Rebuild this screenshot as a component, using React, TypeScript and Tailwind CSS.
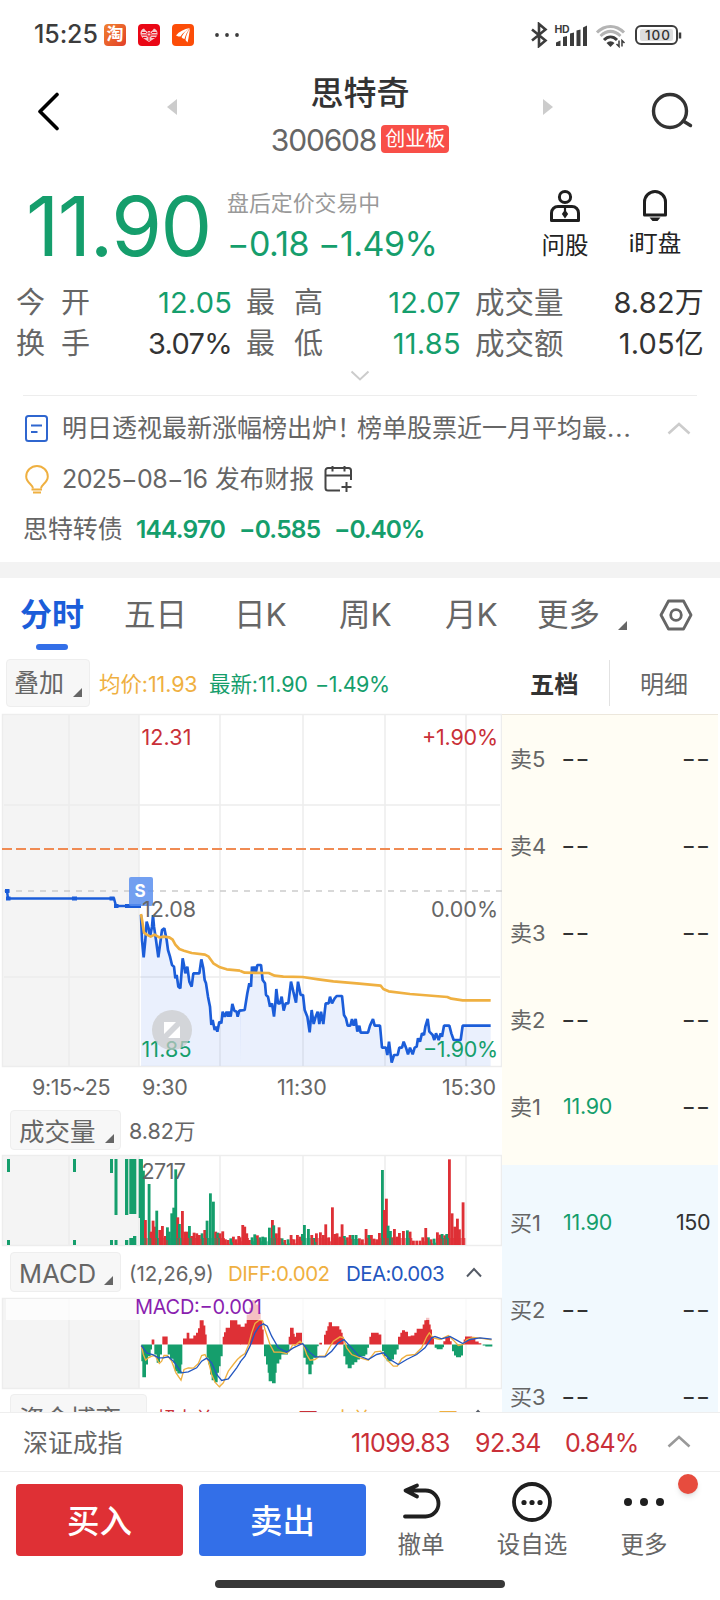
import type { ReactNode } from "react";
import clsx from "clsx";

const RED = "#de3036";
const GREEN = "#159e6c";
const YELLOW = "#efb041";
const BLUE = "#1b5dd9";

const stats = [
  ["今开", "12.05", "最高", "12.07", "成交量", "8.82万"],
  ["换手", "3.07%", "最低", "11.85", "成交额", "1.05亿"],
];

const asks = [
  { name: "卖5", price: "--", amount: "--" },
  { name: "卖4", price: "--", amount: "--" },
  { name: "卖3", price: "--", amount: "--" },
  { name: "卖2", price: "--", amount: "--" },
  { name: "卖1", price: "11.90", amount: "--" },
];

const bids = [
  { name: "买1", price: "11.90", amount: "150" },
  { name: "买2", price: "--", amount: "--" },
  { name: "买3", price: "--", amount: "--" },
];

// Chart series are plotted on a 3x grid, split at x = 240.
const priceA =
  "423,225 426,300 431,352 436,300 440,245 446,265 450,290 456,260 459,225 462,260 468,300 475,352 482,300 486,270 493,265 500,300 504,330 510,350 516,375 522,380 526,415 530,405 535,440 541,445 548,355 552,375 556,400 562,380 568,425 575,440 580,400 598,400 604,358 610,385 614,420 618,430 624,470 630,500 634,555 638,540 644,570 648,560 652,575 658,545 664,550 668,515 674,530 680,515 684,530 688,515 692,530 697,492 703,512 710,515 713,530 718,512 722,512";
const priceB =
  "0,272 14,270 22,220 28,190 33,200 36,140 40,155 44,140 48,155 52,135 63,135 68,180 75,190 78,225 84,230 90,260 96,250 102,290 106,250 109,207 114,250 120,250 125,230 131,272 137,250 145,250 153,185 160,215 168,248 174,185 182,225 189,225 194,270 202,290 209,337 215,270 221,312 227,290 233,275 238,312 243,275 250,312 257,250 266,250 270,230 276,250 284,235 290,228 306,228 312,285 318,295 323,317 331,317 336,297 341,317 347,297 352,335 358,317 362,338 384,338 390,317 399,297 404,317 420,317 426,383 438,383 442,405 447,365 455,428 462,405 473,405 478,383 486,383 491,365 498,383 504,403 510,383 518,403 524,383 530,380 534,355 540,365 546,340 552,345 556,320 563,297 568,335 578,345 583,360 588,340 596,360 602,340 606,350 612,317 628,317 634,340 641,360 662,360 668,317 752,317";
const avgA =
  "423,222 427,245 432,278 440,284 452,290 464,284 478,292 492,290 508,292 518,299 526,314 538,327 552,332 575,339 615,344 626,350 640,370 660,382 680,388 720,392";
const avgB =
  "0,152 14,158 86,159 104,167 130,170 188,171 235,178 280,184 350,190 422,197 430,207 446,214 510,222 622,231 634,236 668,241 752,241";

type Bar = [x: number, top: number, color: "r" | "g"];

const barsA: Bar[] = [
  [424, 178, "g"], [430, 212, "g"], [436, 360, "r"], [447, 252, "g"], [453, 395, "r"],
  [459, 362, "r"], [464, 380, "r"], [470, 332, "g"], [479, 390, "r"], [487, 378, "r"],
  [496, 408, "r"], [502, 382, "g"], [508, 395, "g"], [515, 340, "g"], [521, 323, "g"],
  [527, 208, "g"], [533, 352, "r"], [538, 372, "g"], [547, 333, "r"], [554, 395, "r"],
  [561, 395, "r"], [568, 378, "g"], [575, 408, "r"], [582, 398, "r"], [590, 400, "r"],
  [598, 405, "r"], [606, 400, "g"], [614, 390, "r"], [621, 362, "g"], [631, 280, "g"],
  [640, 305, "g"], [647, 395, "r"], [653, 398, "g"], [660, 400, "r"], [668, 394, "r"],
  [676, 418, "r"], [684, 420, "r"], [692, 415, "g"], [700, 410, "r"], [708, 418, "r"],
  [716, 408, "r"],
];

const barsB: Bar[] = [
  [0, 412, "r"], [8, 375, "r"], [14, 380, "r"], [20, 400, "r"], [28, 420, "r"],
  [36, 412, "g"], [44, 403, "g"], [52, 406, "r"], [60, 412, "g"], [68, 410, "g"],
  [76, 412, "g"], [88, 383, "g"], [97, 360, "r"], [101, 376, "g"], [109, 400, "r"],
  [117, 382, "r"], [126, 415, "g"], [134, 420, "r"], [144, 418, "g"], [153, 405, "r"],
  [162, 418, "r"], [172, 405, "r"], [180, 410, "r"], [187, 402, "g"], [193, 375, "g"],
  [205, 387, "g"], [215, 405, "r"], [222, 414, "g"], [229, 400, "r"], [241, 397, "r"],
  [250, 405, "r"], [257, 373, "r"], [266, 412, "r"], [277, 322, "r"], [284, 402, "r"],
  [291, 400, "r"], [299, 410, "r"], [306, 373, "r"], [313, 408, "g"], [322, 412, "r"],
  [330, 405, "r"], [338, 405, "g"], [348, 405, "g"], [358, 415, "r"], [367, 418, "r"],
  [378, 387, "r"], [386, 405, "g"], [394, 405, "r"], [402, 416, "r"], [410, 418, "r"],
  [418, 399, "r"], [427, 210, "g"], [433, 330, "r"], [439, 296, "r"], [444, 377, "g"],
  [451, 393, "g"], [457, 412, "r"], [463, 387, "r"], [471, 410, "r"], [478, 399, "r"],
  [490, 393, "r"], [502, 391, "g"], [510, 395, "r"], [520, 422, "r"], [530, 422, "r"],
  [540, 422, "r"], [548, 412, "r"], [557, 384, "r"], [565, 412, "g"], [573, 418, "r"],
  [582, 416, "g"], [592, 397, "r"], [600, 404, "r"], [606, 402, "g"], [614, 406, "r"],
  [620, 402, "g"], [628, 178, "r"], [636, 340, "r"], [644, 380, "r"], [652, 356, "r"],
  [658, 388, "r"], [669, 307, "r"],
];

const macdRedA =
  "M455 735V720H463V735ZM487 735V711H503V735ZM549 735V717H560V700H568V717H580V708H588V700H594V686H599V662H611V678H616V705H620V735ZM668 735V712H672V698H677V685H690V662H712V675H722V735Z";
const macdRedB =
  "M0 735V682H14V672H20V645H28V625H35V602H48V615H55V640H62V662H67V690H71V735ZM146 735V712H150V685H161V703H164V712H168V700H186V735ZM238 735V730H246V735ZM252 735V706H257V694H262V680H266V668H276V680H298V690H304V700H308V712H311V735ZM388 735V712H393V700H416V705H424V735ZM474 735V712H481V700H486V692H495V697H504V710H512V708H523V700H530V688H548V675H553V662H558V655H568V675H572V690H576V712H582V735ZM610 735V725H616V712H630V725H635V735ZM671 735V720H675V711H697V718H706V726H716V731H724V735Z";
const macdGreenA =
  "M424 735V785H427V833H438V795H444V770H452V750H456V735ZM463 735V765H470V790H480V765H486V735ZM503 735V765H510V778H520V790H524V815H532V822H544V795H547V735ZM620 735V775H625V795H630V825H635V842H643V848H653V820H657V800H662V770H668V735Z";
const macdGreenB =
  "M72 735V770H78V795H83V820H86V845H96V851H107V820H110V792H118V780H124V765H144V758H148V735ZM190 735V775H197V795H205V824H215V795H220V775H232V740H236V735ZM310 735V770H316V795H323V806H335V796H343V788H352V780H360V770H376V765H382V745H387V735ZM426 735V755H432V770H440V785H455V780H462V765H470V750H476V735ZM584 735V745H590V749H608V743H612V735ZM636 735V755H642V768H648V773H663V768H669V735ZM728 735V738H736V741H757V735Z";
const diffA =
  "424,738 430,765 437,782 445,775 455,770 465,768 478,792 485,785 492,768 502,768 515,785 528,820 543,842 552,810 565,805 580,806 595,792 605,768 615,765 625,785 635,825 645,848 658,862 670,850 685,815 700,795 712,780 722,771";
const diffB =
  "0,772 15,762 25,738 35,700 45,672 60,660 68,665 75,690 90,735 102,758 120,758 140,762 150,752 158,735 165,738 180,725 190,735 200,765 210,782 225,780 238,770 255,770 265,750 280,725 300,712 310,715 320,745 335,765 360,775 385,782 395,770 405,757 422,755 432,770 445,785 460,800 472,800 485,778 500,768 525,765 545,745 560,712 568,700 580,715 600,720 625,708 640,722 655,738 670,735 680,720 700,714 720,716 755,721";
const deaA =
  "424,738 440,760 460,766 475,775 490,775 505,772 520,785 545,820 565,817 590,805 605,785 620,776 635,790 650,825 665,843 685,838 710,805 722,786";
const deaB =
  "0,788 15,770 30,740 45,700 58,680 70,673 82,680 95,710 115,745 140,758 160,745 188,732 205,755 225,772 255,772 275,755 295,730 312,720 330,740 355,768 385,780 410,765 430,760 450,780 475,795 500,780 530,765 555,745 575,715 585,711 605,718 630,711 650,722 668,732 690,720 720,715 755,719";

function StatusBar() {
  return (
    <div className="flex h-[69px] shrink-0 items-center pl-[34px] text-[#3c3c3c]">
      <span className="w-[70px] text-[25px] font-medium tracking-[-0.1px]">15:25</span>
      <div className="flex gap-3">
        <span className="flex size-[22px] items-center justify-center rounded-[4px] bg-gradient-to-br from-[#f08030] to-[#e23c28] text-[17px] leading-none font-bold text-white">
          淘
        </span>
        <svg className="size-[22px]" viewBox="0 0 22 22">
          <rect width="22" height="22" rx="4" fill="#ea0715" />
          <path
            d="M6 4.5C3.5 5 2.3 7.5 2.5 9.500C3 13 5 14 6.500 15L11 18L15.500 15C18 14 19.300 12 19.500 9.500C19.600 7 18 5 16 4.500L14 7H8Z"
            fill="#f6c9cb"
          />
          <path
            d="M4 8.500h4M3.500 11h4.500M5 13.500h3.500M14 8.500h4.500M14 11h5M13.500 13.500h4M9 9h4v3h-4zM11 12v5M8 5l1.500 3M14 5l-1.500 3"
            stroke="#ea0715"
            fill="none"
          />
        </svg>
        <svg className="size-[22px]" viewBox="0 0 22 22">
          <rect width="22" height="22" rx="4" fill="#fc4d08" />
          <path
            d="M4 11.500C7 7.500 12 5 18 4C14 6.500 10.500 9 8.500 12.500C7.500 12.500 5.500 12.500 4 11.500ZM9.500 13C11.500 9 14.500 6 18 4.500C15 8 13.500 11 12.500 15C11.500 14.800 10.500 14.500 9.500 13ZM13.500 16C14 11.500 15.500 8 18 5C17 9.500 17 13 15.500 18.500Z"
            fill="#fff"
          />
        </svg>
      </div>
      <svg className="ml-[21px] h-1 w-6" viewBox="0 0 24 4" fill="#3c3c3c">
        <circle cx="2" cy="2" r="1.900" />
        <circle cx="12" cy="2" r="1.900" />
        <circle cx="22" cy="2" r="1.900" />
      </svg>
      <svg className="ml-[291px] h-[26px] w-[152px]" viewBox="530 21 152 26" fill="none">
        <path
          d="M532 28.500L545.500 39.500L539 45V23L545.500 28.500L532 39.500"
          stroke="#3c3c3c"
          strokeWidth="2.600"
        />
        <text x="554.500" y="32" fontSize="10.500" fontWeight="700" fill="#3c3c3c" textLength="15">
          HD
        </text>
        <path
          d="M556 45v-3.500l4.500-2V45zM563 45v-9l4-1v10zM570 45V32.500l4-1V45zM576.500 45V29.500l4-1V45zM583 45V26.500l4-2V45z"
          fill="#3c3c3c"
        />
        <path d="M597 31.500C605 23.500 616 23.500 624 31.500" stroke="#b4b4b4" strokeWidth="3" />
        <path d="M600.500 35C607 29 614 29 620.500 35" stroke="#b4b4b4" strokeWidth="3" />
        <path d="M604 39C608 35 613 35 617 39" stroke="#3c3c3c" strokeWidth="3" />
        <path d="M606.500 42a5.500 5.500 0 0 1 8 0l-4 4z" fill="#3c3c3c" />
        <path d="M619 39.500v6l-2.500-2.500M622 45.500v-6l2.500 2.500" stroke="#3c3c3c" strokeWidth="1.500" />
        <rect x="636" y="25" width="41" height="18" rx="5" stroke="#3c3c3c" strokeWidth="2" />
        <rect x="640" y="28" width="33" height="12" rx="2" fill="#dedede" />
        <path d="M680 31.500v6" stroke="#3c3c3c" strokeWidth="2.500" />
        <text x="645" y="39" fontSize="13.500" fontWeight="500" fill="#333" textLength="25">
          100
        </text>
      </svg>
    </div>
  );
}

function Header() {
  return (
    <header className="flex h-[109px] shrink-0 items-start pt-1">
      <svg className="mt-[19px] ml-[37px] h-[39px] w-[22px]" viewBox="0 0 22 39" fill="none">
        <path d="M20 2.500L3 19.500L20 36.500" stroke="#000" strokeWidth="3.600" strokeLinecap="round" strokeLinejoin="round" />
      </svg>
      <svg className="mt-[26px] ml-[108px] h-4 w-2.5" viewBox="0 0 10 16">
        <path d="M10 0v16L0 8z" fill="#ccc" />
      </svg>
      <div className="flex flex-1 flex-col items-center">
        <h1 className="h-10 text-[33px] leading-10 font-medium text-[#333]">思特奇</h1>
        <div className="mt-3 flex h-7 items-center gap-[5px]">
          <span className="pt-0.5 text-[30px] tracking-[-1.2px] text-[#666]">300608</span>
          <span className="flex h-7 w-[68px] items-center justify-center rounded-[4px] bg-[#f84f48] text-[20px] text-white">
            创业板
          </span>
        </div>
      </div>
      <svg className="mt-[26px] h-4 w-2.5" viewBox="0 0 10 16">
        <path d="M0 0v16l10-8z" fill="#ccc" />
      </svg>
      <svg className="mt-[19px] mr-[27px] ml-[97px] h-[40px] w-[43px]" viewBox="0 0 43 40" fill="none" stroke="#333" strokeWidth="3.400" strokeLinecap="round">
        <circle cx="20" cy="19" r="16.500" />
        <path d="M34 29.500l6.500 4" />
      </svg>
    </header>
  );
}

function Quote() {
  return (
    <section className="flex h-[104px] shrink-0">
      <div className="mt-1 h-[90px] w-[227px] pl-[26px] text-[82px] leading-[90px] tracking-[-1.500px] text-[#159e6c]">
        11.90
      </div>
      <div className="w-[303px] pt-3">
        <div className="text-[21.900px] leading-[26px] text-[#999]">盘后定价交易中</div>
        <div className="mt-[8px] text-[34px] leading-[40px] tracking-[-0.550px] whitespace-pre text-[#159e6c]">
          −0.18 −1.49%
        </div>
      </div>
      <div className="flex w-[70px] flex-col items-center pt-[11px]">
        <svg className="h-[34px] w-8" viewBox="0 0 32 34" fill="none" stroke="#1f1f1f" strokeWidth="3">
          <circle cx="16" cy="8" r="5.600" />
          <path d="M2.500 31.500V24a6.500 6.500 0 0 1 6.500-6.500h14a6.500 6.500 0 0 1 6.500 6.500v7.500z" strokeLinejoin="round" />
          <path d="M16 18v5M16 22.500l1.800 2.500L16 27.500l-1.800-2.500z" fill="#1f1f1f" strokeWidth="2.200" />
        </svg>
        <span className="mt-[8px] text-[23.500px] leading-[30px] text-[#222]">问股</span>
      </div>
      <div className="ml-5 flex w-[70px] flex-col items-center pt-[11px]">
        <svg className="h-[34px] w-8" viewBox="0 0 32 34" fill="none" stroke="#1f1f1f" strokeWidth="3">
          <path d="M5.500 26V13a10.500 10.500 0 0 1 21 0v13z" strokeLinejoin="round" />
          <path d="M10.500 28.500h11l-3 3.500h-5z" fill="#1f1f1f" stroke="none" />
        </svg>
        <span className="mt-[6px] text-[23.500px] leading-[30px] text-[#222]">i盯盘</span>
      </div>
    </section>
  );
}

function Spread({ text, className }: { text: string; className: string }) {
  return (
    <span className={clsx("flex justify-between", className)}>
      {text.split("").map((char) => (
        <span key={char}>{char}</span>
      ))}
    </span>
  );
}

function Stats() {
  return (
    <section className="h-[114px] shrink-0 text-[29px] text-[#666]">
      {stats.map((row, i) => (
        <div key={row[0]} className="flex h-[41px] items-center leading-none">
          <Spread text={row[0]} className="ml-4 w-[74px]" />
          <span
            className={clsx(
              "w-[142px] text-right",
              i === 0 ? "tracking-[0.200px] text-[#159e6c]" : "tracking-[-0.700px] text-[#333]",
            )}
          >
            {row[1]}
          </span>
          <Spread text={row[2]} className="ml-[14px] w-[77px]" />
          <span className="w-[138px] text-right tracking-[0.300px] text-[#159e6c]">{row[3]}</span>
          <span className="ml-[14px] text-[29.500px]">{row[4]}</span>
          <span className="mr-[16px] flex-1 text-right tracking-[0.200px] text-[#333]">{row[5]}</span>
        </div>
      ))}
      <svg className="mx-auto mt-[6px] h-3 w-5" viewBox="0 0 20 12" fill="none">
        <path d="M1.500 1.500L10 9.500l8.500-8" stroke="#ccc" strokeWidth="2" />
      </svg>
      <div className="mx-[23px] mt-[13px] h-px bg-[#ededed]" />
    </section>
  );
}

function News() {
  return (
    <section className="h-[166px] shrink-0 text-[25px] leading-none text-[#666]">
      <div className="flex h-[64px] items-center pl-[25px]">
        <svg className="h-[27px] w-[23px]" viewBox="0 0 23 27" fill="none" stroke="#2f66cf" strokeWidth="2">
          <rect x="1" y="1" width="21" height="25" rx="2.500" />
          <path d="M6 10.500h11M6 17h6.500" />
        </svg>
        <span className="ml-[14px] w-[574px] whitespace-nowrap">
          明日透视最新涨幅榜出炉<span className="tracking-[-5px]">！</span>榜单股票近一月平均最
          <span className="tracking-[1px]">...</span>
        </span>
        <svg className="ml-[31px] h-[13px] w-6" viewBox="0 0 24 13" fill="none">
          <path d="M1.500 11.500L12 2l10.500 9.500" stroke="#ccc" strokeWidth="2.600" />
        </svg>
      </div>
      <div className="flex h-[38px] items-center pl-[25px]">
        <svg className="h-[29px] w-6" viewBox="0 0 24 29" fill="none" stroke="#efb041" strokeWidth="2">
          <path d="M8 23.500C8 19.500 1.200 18 1.200 11.500a10.800 10.500 0 0 1 21.600 0C22.800 18 16 19.500 16 23.500" />
          <path d="M6.500 24.500h10.500M8 27.500h8" strokeWidth="2.200" />
        </svg>
        <span className="ml-[13px] w-[153px] tracking-[-0.600px]">2025−08−16</span>
        <span className="text-[24.800px]">发布财报</span>
        <svg className="ml-[10px] h-[28px] w-7" viewBox="0 0 28 28" fill="none" stroke="#444" strokeWidth="2">
          <path d="M16 25.500H4A2.500 2.500 0 0 1 1.500 23V5.500A2.500 2.500 0 0 1 4 3h20.500A2.500 2.500 0 0 1 27 5.500V15M1.500 10.500H27M8.500 1v5.500M20.500 1v5.500M22.500 17v10M17.500 22h10" />
        </svg>
      </div>
      <div className="flex h-[62px] items-center pl-[23px]">
        <span className="w-[113px] text-[24.900px]">思特转债</span>
        <span className="w-[103px] text-[24.500px] font-semibold tracking-[-0.800px] text-[#159e6c]">144.970</span>
        <span className="w-[95px] text-[24.500px] font-semibold tracking-[-0.800px] text-[#159e6c]">−0.585</span>
        <span className="text-[24.500px] font-semibold tracking-[-1.100px] text-[#159e6c]">−0.40%</span>
      </div>
    </section>
  );
}

function Corner({ className }: { className?: string }) {
  return (
    <svg className={clsx("size-[9px] shrink-0", className)} viewBox="0 0 9 9">
      <path d="M9 0v9H0z" fill="#666" />
    </svg>
  );
}

function Tabs() {
  return (
    <nav className="flex h-[74px] shrink-0 items-center pl-5 text-[31.500px] leading-none text-[#666]">
      <span className="relative flex h-full w-[104px] items-center text-[32px] font-bold text-[#1b5dd9]">
        分时
        <span className="absolute bottom-[2px] left-4 h-1.5 w-8 rounded-full bg-[#336fe8]" />
      </span>
      <span className="w-[110px]">五日</span>
      <span className="w-[105px]">日K</span>
      <span className="w-[106px]">周K</span>
      <span className="w-[92px]">月K</span>
      <span>更多</span>
      <Corner className="mt-[21px] ml-[18px]" />
      <svg className="ml-[32px] h-8 w-[34px]" viewBox="0 0 34 32" fill="none" stroke="#666" strokeWidth="2.800">
        <path d="M9.500 2h15L32 16l-7.500 14h-15L2 16z" strokeLinejoin="round" />
        <circle cx="17" cy="16" r="5.300" />
      </svg>
    </nav>
  );
}

function ChartBar() {
  return (
    <div className="flex h-[61px] shrink-0 items-center pl-1.5 text-[21.500px] leading-none tracking-[-0.100px] text-[#666]">
      <span className="flex h-12 w-[84px] items-center rounded-[4px] border border-[#eee] bg-[#f7f7f7] pt-0.5 pl-[7px] text-[25px]">
        叠加
        <Corner className="mt-[17px] ml-[9px]" />
      </span>
      <span className="ml-[9px] w-[110px] pt-1 text-[#efb041]">均价:11.93</span>
      <span className="w-[106px] pt-1 text-[#159e6c]">最新:11.90</span>
      <span className="w-[215px] pt-1 tracking-[-0.500px] text-[#159e6c]">−1.49%</span>
      <span className="w-[79px] pt-[3px] text-[24.300px] font-bold text-[#333]">五档</span>
      <span className="h-[46px] w-px bg-[#e2e2e2]" />
      <span className="ml-[30px] pt-[4px] text-[24px]">明细</span>
    </div>
  );
}

function Grid({ height, rows = [] }: { height: number; rows?: number[] }) {
  return (
    <>
      <rect x="2" y="1" width="137" height={height - 2} fill="#f4f4f4" />
      <g stroke="#ededed" strokeWidth="1.500">
        {[69, 139, 220, 303, 385, 466].map((x) => (
          <path key={x} d={`M${x} 1V${height - 2}`} />
        ))}
        {rows.map((y) => (
          <path key={y} d={`M4 ${y}H500`} />
        ))}
        <rect x="2.500" y="1.500" width="499" height={height - 3} fill="none" />
      </g>
    </>
  );
}

function PriceChart() {
  return (
    <svg className="h-[355px] w-[502px] shrink-0" viewBox="0 0 502 355" fill="none">
      <Grid height={355} rows={[92, 264]} />
      <path d="M2 136H502" stroke="#f08b53" strokeWidth="1.800" strokeDasharray="10 4" />
      <path d="M4 178H502" stroke="#ccc" strokeWidth="1.500" strokeDasharray="6 6" />
      <g transform="translate(0 127) scale(.33333)">
        <polygon points={`${priceA} 720,678 423,678`} fill="#2f6bf0" fillOpacity=".1" />
        <polyline points={priceA} stroke={BLUE} strokeWidth="8" strokeLinejoin="bevel" />
      </g>
      <g transform="translate(240 207) scale(.33333)">
        <polygon points={`${priceB} 752,438 0,438`} fill="#2f6bf0" fillOpacity=".1" />
        <polyline points={priceB} stroke={BLUE} strokeWidth="8" strokeLinejoin="bevel" />
      </g>
      <path d="M7 178L8 185.500H114L116 193H141" stroke={BLUE} strokeWidth="2.500" />
      <path d="M5 176h4.500v4H5zM6 183.500h4.500v4H6zM72 183.500h5v4h-5zM109.500 183.500h5v4h-5zM114 191h4.500v4H114zM125 191h16v4h-16z" fill={BLUE} />
      <rect x="129" y="164" width="24" height="29" rx="2" fill="#5b8fee" fillOpacity=".85" />
      <text x="134.500" y="184" fontSize="17" fontWeight="700" fill="#fff">S</text>
      <polyline transform="translate(0 127) scale(.33333)" points={avgA} stroke={YELLOW} strokeWidth="8" strokeLinejoin="round" />
      <polyline transform="translate(240 207) scale(.33333)" points={avgB} stroke={YELLOW} strokeWidth="8" strokeLinejoin="round" />
      <g fontSize="21.500">
        <text x="141.500" y="32" fill="#c93038" textLength="50">12.31</text>
        <text x="498" y="32" fill="#c93038" textAnchor="end" textLength="76">+1.90%</text>
        <text x="142" y="204" fill="#666" textLength="54">12.08</text>
        <text x="498" y="204" fill="#666" textAnchor="end" textLength="67">0.00%</text>
        <text x="141.500" y="344" fill={GREEN} textLength="50">11.85</text>
        <text x="498" y="344" fill={GREEN} textAnchor="end" textLength="75">−1.90%</text>
      </g>
      <circle cx="172" cy="317" r="20" fill="#c9c9c9" fillOpacity=".7" />
      <path d="M164 309h12l-12 12zM180 313v12h-12z" fill="#fff" />
    </svg>
  );
}

function Bars({ bars }: { bars: Bar[] }) {
  return (
    <>
      {bars.map(([x, top, color]) => (
        <rect key={x} x={x - 4} y={top} width="8.500" height={435 - top} fill={color === "r" ? RED : GREEN} />
      ))}
      {/* low volume between the peaks */}
      {bars.map(([x, top, color]) => (
        <rect key={x} x={x + 3} y={Math.max(top + 12, 414)} width="4" height={435 - Math.max(top + 12, 414)} fill={color === "r" ? RED : GREEN} opacity=".8" />
      ))}
    </>
  );
}

function VolumeChart() {
  return (
    <svg className="h-[93px] w-[502px] shrink-0" viewBox="0 0 502 93" fill="none">
      <Grid height={93} />
      <path
        d="M7 5h3v13H7zM73 5h3v13h-3zM110 5h3v14h-3zM114.500 5h3v56h-3zM125 5h3.300v56H125zM129.300 5h7v55h-7zM138.700 5h4v59h-4zM7 86h3v5H7zM73 86h3v5h-3zM110 86h3v5h-3zM114.500 86h3v5h-3zM125 86h3.300v5H125zM129.300 84h3.700v7h-3.700zM133 82h3.300v9H133z"
        fill={GREEN}
      />
      <g transform="translate(0 -54) scale(.33333)">
        <Bars bars={barsA} />
      </g>
      <g transform="translate(240 -54) scale(.33333)">
        <Bars bars={barsB} />
      </g>
      <text x="141.500" y="24.500" fontSize="21.500" fill="#666" textLength="44.500">2717</text>
    </svg>
  );
}

function MacdChart() {
  return (
    <svg className="h-[93px] w-[502px] shrink-0 overflow-visible" viewBox="0 0 502 93" fill="none">
      <Grid height={93} />
      <g transform="translate(0 -197.500) scale(.33333)">
        <path d={macdRedA} fill={RED} />
        <path d={macdGreenA} fill={GREEN} />
        <polyline points={diffA} stroke={YELLOW} strokeWidth="4" />
        <polyline points={deaA} stroke="#2457c0" strokeWidth="4" />
      </g>
      <g transform="translate(240 -197.500) scale(.33333)">
        <path d={macdRedB} fill={RED} />
        <path d={macdGreenB} fill={GREEN} />
        <polyline points={diffB} stroke={YELLOW} strokeWidth="4" />
        <polyline points={deaB} stroke="#2457c0" strokeWidth="4" />
      </g>
      <rect x="6" y="2" width="492" height="21" fill="#fff" fillOpacity=".7" />
      <text x="135" y="16.500" fontSize="20" fill="#8a1fb0" textLength="127">MACD:−0.001</text>
    </svg>
  );
}

function Picker({ children, className }: { children: ReactNode; className: string }) {
  return (
    <span className={clsx("ml-2.5 flex h-10 shrink-0 items-center rounded-[4px] border border-[#eee] bg-[#f7f7f7] pt-[3px] pl-[8px] text-[25.500px]", className)}>
      {children}
    </span>
  );
}

function ChevronUp({ className }: { className?: string }) {
  return (
    <svg className={clsx("h-[11px] w-4", className)} viewBox="0 0 16 11" fill="none">
      <path d="M1 9.500L8 2l7 7.500" stroke="#555b66" strokeWidth="2" />
    </svg>
  );
}

function Charts() {
  return (
    <div className="flex w-[502px] flex-col leading-none text-[#666]">
      <PriceChart />
      <div className="flex h-[38px] shrink-0 items-center pt-0.5 text-[21.500px] tracking-[-0.200px]">
        <span className="ml-8 w-[110px] tracking-[-0.400px]">9:15~25</span>
        <span className="w-[135px]">9:30</span>
        <span className="w-[165px]">11:30</span>
        <span>15:30</span>
      </div>
      <div className="flex h-[48px] shrink-0 items-center">
        <Picker className="w-[111px]">
          成交量
          <Corner className="mt-[14px] ml-[9px]" />
        </Picker>
        <span className="ml-2 pt-1 text-[21.500px]">8.82万</span>
      </div>
      <VolumeChart />
      <div className="flex h-[50px] shrink-0 items-center text-[20.500px]">
        <Picker className="w-[111px]">
          <span className="w-[77px] pt-px tracking-[0.100px]">MACD</span>
          <Corner className="mt-[14px] ml-[8px]" />
        </Picker>
        <span className="ml-2 w-[99px] pt-1">(12,26,9)</span>
        <span className="w-[118px] pt-1 tracking-[-0.500px] text-[#efb041]">DIFF:0.002</span>
        <span className="w-[120px] pt-1 tracking-[-0.600px] text-[#2457c0]">DEA:0.003</span>
        <ChevronUp />
      </div>
      <MacdChart />
      <div className="flex h-[60px] shrink-0 items-start pt-1 text-[19.300px]">
        <Picker className="w-[137px]">
          <span className="pt-1.5">资金博弈</span>
        </Picker>
        <span className="mt-[16px] ml-[9px] w-[177px] tracking-[-0.200px] whitespace-nowrap text-[#c93038]">超大单:−1019.20万</span>
        <span className="mt-[16px] w-[137px] tracking-[-0.500px] whitespace-nowrap text-[#efb041]">大单:−22.40万</span>
        <ChevronUp className="mt-[15px]" />
      </div>
    </div>
  );
}

function Dashes() {
  return <span className="-ml-0.5 text-[32px] font-light tracking-[-0.200px]">--</span>;
}

function Level({ name, price, amount }: { name: string; price: string; amount: string }) {
  return (
    <div className="flex h-[87px] shrink-0 items-center pl-[8px] text-[21.500px] leading-none text-[#333]">
      <span className="w-[53px] text-[22px] text-[#666]">{name}</span>
      {price === "--" ? <Dashes /> : <span className="tracking-[-0.300px] text-[#159e6c]">{price}</span>}
      <span className="mr-[8px] flex flex-1 justify-end tracking-[-0.500px]">
        {amount === "--" ? <Dashes /> : amount}
      </span>
    </div>
  );
}

function OrderBook() {
  return (
    <div className="flex w-[216px] flex-col pt-px">
      <div className="h-[451px] shrink-0 border-t border-[#ece7dc] bg-[#fffdf4]">
        {asks.map((level) => (
          <Level key={level.name} {...level} />
        ))}
      </div>
      <div className="shrink-0 bg-[#f1f9fe] pt-[14px]">
        {bids.map((level) => (
          <Level key={level.name} {...level} />
        ))}
      </div>
    </div>
  );
}

function IndexBar() {
  return (
    <div className="flex h-[60px] shrink-0 items-center border-y border-[#eee] bg-white pt-0.5 pl-[23px] leading-none text-[#c93038]">
      <span className="w-[328px] text-[24.900px] text-[#666]">深证成指</span>
      <span className="w-[124px] text-[25px] tracking-[-0.650px]">11099.83</span>
      <span className="w-[90px] text-[25px] tracking-[-0.600px]">92.34</span>
      <span className="w-[102px] text-[25px] tracking-[-0.900px]">0.84%</span>
      <svg className="mb-1 h-[13px] w-6" viewBox="0 0 24 13" fill="none">
        <path d="M1.500 11.500L12 2l10.500 9.500" stroke="#999" strokeWidth="2.600" />
      </svg>
    </div>
  );
}

function Action({ label, children, className }: { label: string; children: ReactNode; className: string }) {
  return (
    <div className={clsx("flex flex-col items-center", className)}>
      <svg className="h-[42px] w-[42px]" viewBox="0 0 42 42" fill="none" stroke="#1f1f1f" strokeWidth="3.800">
        {children}
      </svg>
      <span className="mt-[7px] text-[23.500px] leading-[30px] text-[#666]">{label}</span>
    </div>
  );
}

function Actions() {
  return (
    <footer className="flex h-[128px] shrink-0 flex-col bg-white">
      <div className="flex h-[108px] pt-3 pl-4">
        <button className="h-[72px] w-[167px] rounded-[4px] bg-[#df3035] pt-1 text-[32.500px] font-medium text-white">
          买入
        </button>
        <button className="ml-4 h-[72px] w-[167px] rounded-[4px] bg-[#336fe8] pt-1 text-[32.500px] font-medium text-white">
          卖出
        </button>
        <div className="-mt-[3px] flex">
          <Action label="撤单" className="ml-[10px] w-[90px]">
            <path d="M5 35.500h20.500a12.800 12.800 0 0 0 0-26H7M17 4.500L5.500 9.500L17 15.500" strokeLinecap="round" strokeLinejoin="round" />
          </Action>
          <Action label="设自选" className="ml-[21px] w-[90px]">
            <circle cx="21" cy="21" r="18" />
            <g fill="#1f1f1f" stroke="none">
              <circle cx="13" cy="21.500" r="2.600" />
              <circle cx="21" cy="21.500" r="2.600" />
              <circle cx="29" cy="21.500" r="2.600" />
            </g>
          </Action>
          <div className="relative">
            <Action label="更多" className="ml-[22px] w-[90px]">
              <g fill="#1f1f1f" stroke="none">
                <circle cx="5" cy="21" r="4" />
                <circle cx="21" cy="21" r="4" />
                <circle cx="37" cy="21" r="4" />
              </g>
            </Action>
            <span className="absolute -top-[7px] right-[-9px] size-5 rounded-full bg-[#e74c3e] shadow-md" />
          </div>
        </div>
      </div>
      <div className="mx-auto h-2 w-[290px] rounded-full bg-[#383838]" />
    </footer>
  );
}

export default function App() {
  return (
    <div className="flex h-[1600px] w-[720px] flex-col overflow-hidden bg-white font-['Inter','Noto_Sans_CJK_SC',sans-serif]">
      <StatusBar />
      <Header />
      <Quote />
      <Stats />
      <News />
      <div className="h-4 shrink-0 bg-[#f3f3f3]" />
      <Tabs />
      <ChartBar />
      <div className="flex h-[699px] shrink-0 overflow-hidden">
        <Charts />
        <OrderBook />
      </div>
      <IndexBar />
      <Actions />
    </div>
  );
}
